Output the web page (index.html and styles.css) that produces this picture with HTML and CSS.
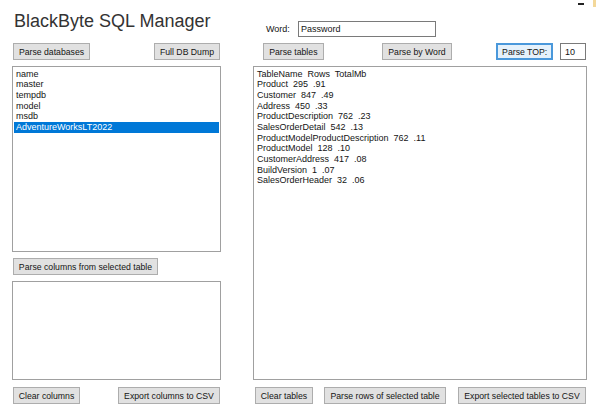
FILE: index.html
```
<!DOCTYPE html>
<html>
<head>
  <title>BlackByte SQL Manager</title>
  <link rel="stylesheet" href="styles.css">
</head>
<body>
  <!-- window chrome leftovers in the corner -->
  <span class="win-min"></span>
  <span class="win-edge"></span>

  <div class="form">
    <!-- Left side: databases and columns -->
    <div class="left">
      <h1 class="title">BlackByte SQL Manager</h1>
      <div class="btn-row spread">
        <button class="btn w-parse-db">Parse databases</button>
        <button class="btn w-dump">Full DB Dump</button>
      </div>
      <div class="listbox db-list">
        <div class="item">name</div>
        <div class="item">master</div>
        <div class="item">tempdb</div>
        <div class="item">model</div>
        <div class="item">msdb</div>
        <div class="item selected">AdventureWorksLT2022</div>
      </div>
      <div class="btn-row mid">
        <button class="btn w-parse-cols">Parse columns from selected table</button>
      </div>
      <div class="listbox col-list"></div>
      <div class="btn-row spread bottom">
        <button class="btn w-clear-cols">Clear columns</button>
        <button class="btn w-export-cols">Export columns to CSV</button>
      </div>
    </div>

    <!-- Right side: tables -->
    <div class="right">
      <div class="word-row">
        <label class="word-label" for="wordBox">Word:</label>
        <input type="text" id="wordBox" class="textbox word-box" value="Password">
      </div>
      <div class="btn-row tables-row">
        <button class="btn w-parse-tables">Parse tables</button>
        <button class="btn w-parse-word">Parse by Word</button>
        <button class="btn btn-focus w-parse-top">Parse TOP:</button>
        <input type="text" class="textbox top-box" value="10">
      </div>
      <div class="listbox table-list">
        <div class="item">TableName&nbsp; Rows&nbsp; TotalMb</div>
        <div class="item">Product&nbsp; 295&nbsp; .91</div>
        <div class="item">Customer&nbsp; 847&nbsp; .49</div>
        <div class="item">Address&nbsp; 450&nbsp; .33</div>
        <div class="item">ProductDescription&nbsp; 762&nbsp; .23</div>
        <div class="item">SalesOrderDetail&nbsp; 542&nbsp; .13</div>
        <div class="item">ProductModelProductDescription&nbsp; 762&nbsp; .11</div>
        <div class="item">ProductModel&nbsp; 128&nbsp; .10</div>
        <div class="item">CustomerAddress&nbsp; 417&nbsp; .08</div>
        <div class="item">BuildVersion&nbsp; 1&nbsp; .07</div>
        <div class="item">SalesOrderHeader&nbsp; 32&nbsp; .06</div>
      </div>
      <div class="btn-row bottom tables-bottom">
        <button class="btn w-clear-tables">Clear tables</button>
        <button class="btn w-parse-rows">Parse rows of selected table</button>
        <button class="btn w-export-tables">Export selected tables to CSV</button>
      </div>
    </div>
  </div>
</body>
</html>
```

FILE: styles.css
```
/* General body styles */
body {
  margin: 0;
  background: #ffffff;
  font-family: "Liberation Sans", Arial, sans-serif;
  color: #141414;
  width: 596px;
  height: 418px;
  overflow: hidden;
  position: relative;
}

/* Two columns of the form */
.form {
  display: flex;
  padding-left: 12px;
}

.left {
  width: 209px;
  display: flex;
  flex-direction: column;
}

.right {
  width: 334px;
  margin-left: 32px;
  padding-top: 21px;
  display: flex;
  flex-direction: column;
}

/* Title */
.title {
  margin: 10px 0 11px 2px;
  font-size: 18px;
  line-height: 22px;
  font-weight: normal;
  color: #333333;
  white-space: nowrap;
}

/* Button rows */
.btn-row {
  display: flex;
  padding: 0 1px;
}

.btn-row.spread {
  justify-content: space-between;
}

.btn-row.mid {
  margin-top: 6px;
}

.btn-row.bottom {
  margin-top: 7px;
}

.btn {
  height: 17px;
  padding: 0;
  background-color: #e1e1e1;
  border: 1px solid #adadad;
  border-radius: 0;
  font-family: "Liberation Sans", Arial, sans-serif;
  font-size: 8.7px;
  color: #141414;
  white-space: nowrap;
  cursor: pointer;
}

.btn-focus {
  background-color: #e5f1fb;
  border: 2px solid #4a98db;
}

/* Button widths, as set in the designer */
.w-parse-db { width: 77px; }
.w-dump { width: 66px; }
.w-parse-cols { width: 145px; }
.w-clear-cols { width: 67px; }
.w-export-cols { width: 102px; }
.w-parse-tables { width: 61px; }
.w-parse-word { width: 71px; margin-left: 58px; }
.w-parse-top { width: 57px; margin-left: 44px; }
.w-clear-tables { width: 58px; }
.w-parse-rows { width: 122px; margin-left: 11px; }
.w-export-tables { width: 128px; margin-left: 12px; }

.tables-row {
  padding-left: 10px;
}

.tables-bottom {
  padding-left: 2px;
}

/* List boxes */
.listbox {
  margin-top: 6px;
  border: 1px solid #a0a0a0;
  background: #ffffff;
  padding: 1.5px 1px;
  box-sizing: border-box;
  font-size: 9px;
  line-height: 10.67px;
}

.db-list { height: 186px; }
.col-list { height: 99px; }
.table-list { height: 314px; }

.item {
  padding-left: 2px;
  white-space: nowrap;
}

.item.selected {
  background-color: #0078d7;
  color: #ffffff;
}

/* Text boxes */
.word-row {
  display: flex;
  align-items: center;
  padding-left: 13px;
  margin-bottom: 6px;
}

.word-label {
  width: 32px;
  font-size: 9px;
}

.textbox {
  box-sizing: border-box;
  height: 16px;
  margin: 0;
  padding: 0 2px;
  border: 1px solid #7a7a7a;
  font-family: "Liberation Sans", Arial, sans-serif;
  font-size: 9px;
  color: #141414;
  outline: none;
}

.word-box { width: 138px; }

.top-box {
  width: 26px;
  height: 17px;
  margin-left: 7px;
  padding-left: 4px;
}

/* Corner bits of the window frame */
.win-min {
  position: absolute;
  top: 3px;
  left: 578px;
  width: 6px;
  height: 2px;
  background: #222;
}

.win-edge {
  position: absolute;
  top: 0;
  right: 0;
  width: 3px;
  height: 7px;
  background: #f3d89a;
}
```
